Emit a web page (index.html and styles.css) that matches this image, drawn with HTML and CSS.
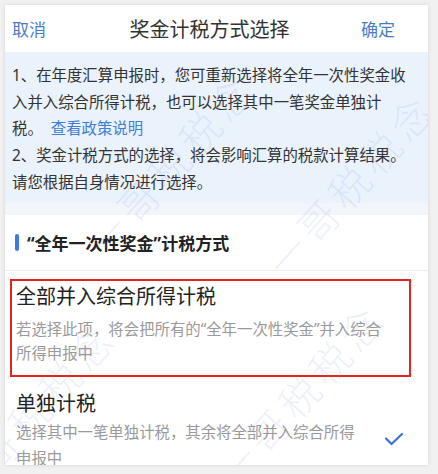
FILE: index.html
```html
<!DOCTYPE html>
<html lang="zh-CN">
<head>
  <meta charset="UTF-8">
  <meta name="viewport" content="width=device-width, initial-scale=1.0">
  <title>奖金计税方式选择</title>
  <link rel="stylesheet" href="styles.css">
</head>
<body>
  <div class="sheet">
    <!-- Top Bar -->
    <div class="topbar">
      <span class="action">取消</span>
      <span class="title">奖金计税方式选择</span>
      <span class="action">确定</span>
    </div>

    <!-- Notice -->
    <div class="notice">
      <p>1、在年度汇算申报时，您可重新选择将全年一次性奖金收入并入综合所得计税，也可以选择其中一笔奖金单独计税。 <a class="link">查看政策说明</a></p>
      <p>2、奖金计税方式的选择，将会影响汇算的税款计算结果。请您根据自身情况进行选择。</p>
    </div>
    <div class="gap"></div>

    <!-- Section -->
    <div class="section-head">
      <span class="bar"></span>
      <span>“全年一次性奖金”计税方式</span>
    </div>

    <div class="options">
      <div class="option marked">
        <div class="option-title">全部并入综合所得计税</div>
        <div class="option-desc">若选择此项，将会把所有的“全年一次性奖金”并入综合所得申报中</div>
      </div>
      <div class="option selected">
        <div class="option-text">
          <div class="option-title">单独计税</div>
          <div class="option-desc">选择其中一笔单独计税，其余将全部并入综合所得申报中</div>
        </div>
        <svg class="check" width="20" height="14" viewBox="0 0 20 14">
          <path d="M2 6.5 L7.5 12 L18 2" fill="none" stroke="#3b72d4" stroke-width="2.2" stroke-linecap="round" stroke-linejoin="round"/>
        </svg>
      </div>
    </div>

    <!-- Watermark -->
    <span class="wm wm1">一哥税税念</span>
    <span class="wm wm2">一哥税税念</span>
    <span class="wm wm3">一哥税税念</span>
    <span class="wm wm4">一哥税税念</span>
  </div>
</body>
</html>
```

FILE: styles.css
```css
/* Reset */
* {
  margin: 0;
  padding: 0;
  box-sizing: border-box;
}

body {
  font-family: "Noto Sans", "Noto Sans CJK SC", sans-serif;
  background: #f1f1f1;
  color: #333;
  padding: 5px 10px 9px 5px;
}

.sheet {
  position: relative;
  width: 423px;
  height: 460px;
  background: #fff;
  overflow: hidden;
  box-shadow: 0 0 4px rgba(0, 0, 0, 0.12);
}

/* Top Bar */
.topbar {
  height: 47px;
  display: flex;
  align-items: center;
  justify-content: space-between;
  padding: 0 33px 0 7px;
}

.action {
  font-size: 17px;
  color: #4a7bc6;
}

.title {
  font-size: 20px;
  color: #333;
  padding-left: 12px;
}

/* Notice */
.notice {
  background: #eaf2fc;
  padding: 11px 18px 6px 7px;
  font-size: 15.4px;
  line-height: 26.7px;
  color: #333;
}

.link {
  color: #3d7fd6;
  margin-left: 4px;
}

.gap {
  height: 12px;
  background: #f2f5fa;
}

/* Section Head */
.section-head {
  height: 56px;
  display: flex;
  align-items: center;
  gap: 8px;
  padding-left: 10px;
  font-size: 17px;
  font-weight: bold;
  color: #222;
  border-bottom: 1px solid #eee;
}

.bar {
  width: 4px;
  height: 17px;
  border-radius: 2px;
  background: #3d7be0;
}

/* Options */
.options {
  padding: 8px 17px 0 5px;
}

.option {
  padding: 2px 14px 9px 4px;
  border: 2px solid transparent;
}

.option.marked {
  border-color: #e42222;
}

.option-title {
  font-size: 20px;
  line-height: 28px;
  color: #222;
}

.option-desc {
  margin-top: 7px;
  font-size: 15.4px;
  line-height: 24px;
  color: #9a9a9a;
}

.option.selected {
  display: flex;
  align-items: flex-start;
  padding-top: 11px;
  padding-right: 4px;
}

.option.selected .option-desc {
  margin-top: 2px;
  line-height: 26px;
}

.option-text {
  flex: 1;
  padding-right: 20px;
}

.check {
  margin-top: 42px;
  margin-right: 1px;
}

/* Watermark */
.wm {
  position: absolute;
  font-size: 40px;
  font-weight: 300;
  letter-spacing: 6px;
  color: rgba(110, 130, 225, 0.12);
  white-space: nowrap;
  transform: rotate(-48deg);
  pointer-events: none;
}

.wm1 { left: 50px; top: 130px; }
.wm2 { left: 230px; top: 150px; }
.wm3 { left: 180px; top: 360px; }
.wm4 { left: -90px; top: 380px; }
```
